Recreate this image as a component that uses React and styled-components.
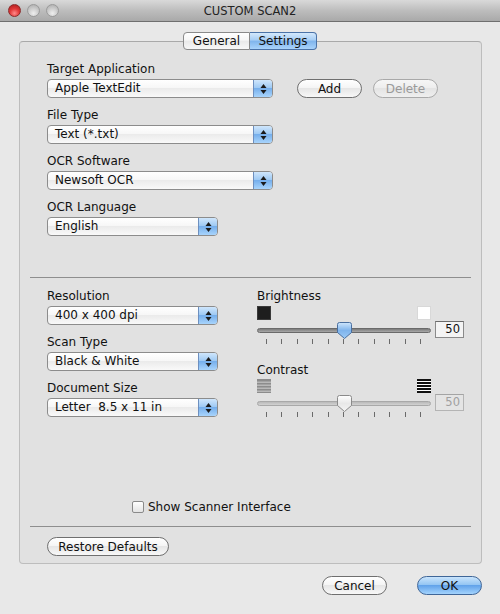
import styled, { createGlobalStyle } from 'styled-components';

const GlobalStyle = createGlobalStyle`
  html, body {
    margin: 0;
    padding: 0;
    background: #e8e8e8;
  }
  * {
    box-sizing: border-box;
  }
`;

const Window = styled.div`
  width: 500px;
  height: 614px;
  background: #e8e8e8;
  font-family: 'DejaVu Sans', 'Liberation Sans', sans-serif;
  font-size: 12px;
  color: #111;
  display: flex;
  flex-direction: column;
  overflow: hidden;
`;

const TitleBar = styled.div`
  height: 22px;
  flex: none;
  display: flex;
  align-items: center;
  padding-left: 8px;
  background: linear-gradient(#d9d9d9, #bdbdbd 50%, #a9a9a9);
  border-bottom: 1px solid #6f6f6f;
  position: relative;
`;

const Lights = styled.div`
  display: flex;
  gap: 6px;
`;

const Light = styled.div`
  width: 13px;
  height: 13px;
  border-radius: 50%;
  border: 1px solid ${p => (p.$red ? '#8c2a2a' : '#9a9a9a')};
  background: ${p =>
    p.$red
      ? 'radial-gradient(circle at 50% 75%, #ff8a8a 0, #e23a3a 45%, #a81c1c 100%)'
      : 'radial-gradient(circle at 50% 75%, #eeeeee 0, #cfcfcf 45%, #a8a8a8 100%)'};
`;

const Title = styled.div`
  position: absolute;
  left: 0;
  right: 0;
  text-align: center;
  font-size: 11.5px;
  color: #222;
  pointer-events: none;
`;

const Content = styled.div`
  flex: 1;
  display: flex;
  flex-direction: column;
  padding: 10px 18px 0 19px;
`;

const Tabs = styled.div`
  display: flex;
  justify-content: center;
  margin-bottom: -9px;
  position: relative;
  z-index: 1;
  padding-right: 1px;
`;

const Tab = styled.div`
  width: 67px;
  height: 18px;
  display: flex;
  align-items: center;
  justify-content: center;
  border: 1px solid ${p => (p.$active ? '#4b73a8' : '#8a8a8a')};
  border-radius: ${p => (p.$first ? '4px 0 0 4px' : '0 4px 4px 0')};
  border-left-width: ${p => (p.$first ? '1px' : '0')};
  background: ${p =>
    p.$active
      ? 'linear-gradient(#d3e8fc, #a6cdf4 45%, #7fb4ec 50%, #a9d3fb)'
      : 'linear-gradient(#ffffff, #f6f6f6 45%, #e9e9e9 50%, #f7f7f7)'};
`;

const GroupBox = styled.div`
  height: 523px;
  display: flex;
  flex-direction: column;
  background: #e1e1e1;
  border: 1px solid #bdbdbd;
  border-top-color: #a9a9a9;
  border-radius: 4px;
  padding: 0 10px;
`;

const UpperSection = styled.div`
  padding: 19px 17px 41px;
  display: flex;
  flex-direction: column;
  gap: 9px;
`;

const Separator = styled.div`
  height: 1px;
  background: #8e8e8e;
  flex: none;
`;

const LowerSection = styled.div`
  flex: 1;
  padding: 10px 17px 11px;
  display: flex;
  flex-direction: column;
`;

const Columns = styled.div`
  display: flex;
  gap: 40px;
`;

const LeftColumn = styled.div`
  width: 170px;
  display: flex;
  flex-direction: column;
  gap: 9px;
`;

const RightColumn = styled.div`
  display: flex;
  flex-direction: column;
`;

const Field = styled.div`
  display: flex;
  flex-direction: column;
  gap: 2px;
`;

const FieldRow = styled.div`
  display: flex;
  align-items: center;
  gap: 24px;
`;

const ButtonPair = styled.div`
  display: flex;
  gap: 11px;
`;

const Label = styled.div`
  height: 16px;
  line-height: 16px;
  white-space: nowrap;
  margin-top: ${p => p.$mt || 0}px;
`;

const Popup = styled.div`
  width: ${p => p.$width}px;
  height: 19px;
  display: flex;
  border: 1px solid #8c8c8c;
  border-radius: 4px;
  overflow: hidden;
  background: linear-gradient(#ffffff, #f7f7f7 45%, #ebebeb 50%, #f9f9f9);
`;

const PopupText = styled.div`
  flex: 1;
  padding-left: 7px;
  line-height: 17px;
  white-space: nowrap;
`;

const PopupArrows = styled.div`
  width: 19px;
  display: flex;
  align-items: center;
  justify-content: center;
  border-left: 1px solid #6d8fbf;
  background: linear-gradient(#cfe6fc, #9fcaf4 45%, #76afec 50%, #a8d4fc);
`;

const PushButton = styled.div`
  width: ${p => p.$width}px;
  height: 19px;
  display: flex;
  align-items: center;
  justify-content: center;
  border-radius: 10px;
  border: 1px solid ${p => (p.$disabled ? '#a9a9a9' : p.$primary ? '#3f6698' : '#6f6f6f')};
  color: ${p => (p.$disabled ? '#9a9a9a' : '#111')};
  background: ${p =>
    p.$primary
      ? 'linear-gradient(#c9e4fc, #95c6f3 45%, #62a3ea 50%, #a3d3fd)'
      : p.$disabled
      ? 'linear-gradient(#f6f6f6, #eeeeee 45%, #e4e4e4 50%, #efefef)'
      : 'linear-gradient(#ffffff, #f5f5f5 45%, #e6e6e6 50%, #f8f8f8)'};
  white-space: nowrap;
`;

const IconRow = styled.div`
  width: 174px;
  height: ${p => p.$h}px;
  margin-top: ${p => p.$mt}px;
  display: flex;
  justify-content: space-between;
  align-items: flex-start;
`;

const SliderRow = styled.div`
  display: flex;
  align-items: flex-start;
  gap: 4px;
  margin-top: ${p => p.$mt}px;
`;

const SliderColumn = styled.div`
  width: 174px;
  display: flex;
  flex-direction: column;
`;

const SliderArea = styled.div`
  position: relative;
  height: 17px;
  display: flex;
  align-items: center;
`;

const Track = styled.div`
  flex: 1;
  height: 5px;
  border-radius: 3px;
  border: 1px solid ${p => (p.$disabled ? '#a8a8a8' : '#6a6a6a')};
  background: ${p =>
    p.$disabled
      ? 'linear-gradient(#b9b9b9, #d2d2d2)'
      : 'linear-gradient(#7a7a7a, #a9a9a9)'};
`;

const Thumb = styled.div`
  position: absolute;
  top: 0;
  left: calc(${p => p.$pos}% - 7px);
  width: 15px;
  height: 17px;
  display: flex;
`;

const Ticks = styled.div`
  display: flex;
  justify-content: space-between;
  padding: 0 10px 0 9px;
  height: 5px;
`;

const Tick = styled.div`
  width: 1px;
  height: 5px;
  background: #6a6a6a;
`;

const NumberField = styled.div`
  width: 29px;
  height: 17px;
  margin-top: -1px;
  border: 1px solid ${p => (p.$disabled ? '#b4b4b4' : '#8a8a8a')};
  border-top-color: ${p => (p.$disabled ? '#a4a4a4' : '#6c6c6c')};
  background: ${p => (p.$disabled ? '#e4e4e4' : '#f4f4f4')};
  color: ${p => (p.$disabled ? '#a0a0a0' : '#111')};
  text-align: right;
  padding-right: 3px;
  line-height: 15px;
  font-size: 11.5px;
`;

const CheckRow = styled.div`
  margin-top: auto;
  margin-left: 85px;
  height: 16px;
  display: flex;
  align-items: center;
  gap: 4px;
`;

const CheckBox = styled.div`
  width: 12px;
  height: 12px;
  border: 1px solid #8a8a8a;
  border-radius: 2px;
  background: linear-gradient(#ffffff, #f1f1f1 50%, #e4e4e4);
`;

const BottomSection = styled.div`
  padding: 10px 17px 7px;
`;

const Footer = styled.div`
  display: flex;
  justify-content: flex-end;
  gap: 30px;
  margin-top: 12px;
`;

function Arrows() {
  return (
    <svg width="7" height="12" viewBox="0 0 7 12">
      <path d="M3.5 1 L6.5 5 L0.5 5 Z" fill="#1b1b1b" />
      <path d="M3.5 11 L6.5 7 L0.5 7 Z" fill="#1b1b1b" />
    </svg>
  );
}

function Select({ value, width }) {
  return (
    <Popup $width={width}>
      <PopupText>{value}</PopupText>
      <PopupArrows>
        <Arrows />
      </PopupArrows>
    </Popup>
  );
}

function ThumbShape({ blue }) {
  const id = blue ? 'thumbBlue' : 'thumbWhite';
  return (
    <svg width="15" height="17" viewBox="0 0 15 17">
      <defs>
        <linearGradient id={id} x1="0" y1="0" x2="0" y2="1">
          <stop offset="0" stopColor={blue ? '#cfe6fc' : '#ffffff'} />
          <stop offset="0.5" stopColor={blue ? '#7fb4ec' : '#e8e8e8'} />
          <stop offset="1" stopColor={blue ? '#9ccaf6' : '#f4f4f4'} />
        </linearGradient>
      </defs>
      <path
        d="M2.5 0.5 H12.5 Q14.5 0.5 14.5 2.5 V10.5 L7.5 16.5 L0.5 10.5 V2.5 Q0.5 0.5 2.5 0.5 Z"
        fill={`url(#${id})`}
        stroke={blue ? '#4a6f9f' : '#8a8a8a'}
      />
    </svg>
  );
}

function LowContrast() {
  return (
    <svg width="14" height="14" viewBox="0 0 14 14">
      <rect x="0" y="0" width="14" height="14" fill="#8c8c8c" />
      {[1, 4, 7, 10].map(y => (
        <rect key={y} x="0" y={y + 1.5} width="14" height="1.5" fill="#b8b8b8" />
      ))}
    </svg>
  );
}

function HighContrast() {
  return (
    <svg width="14" height="14" viewBox="0 0 14 14">
      <rect x="0" y="0" width="14" height="14" fill="#ffffff" />
      {[0, 3, 6, 9, 12].map(y => (
        <rect key={y} x="0" y={y} width="14" height="2" fill="#111111" />
      ))}
    </svg>
  );
}

function Square({ dark }) {
  return (
    <svg width="14" height="14" viewBox="0 0 14 14">
      <rect
        x="0.5"
        y="0.5"
        width="13"
        height="13"
        fill={dark ? '#1e1e1e' : '#ffffff'}
        stroke={dark ? '#3a3a3a' : '#d8d8d8'}
      />
    </svg>
  );
}

function Slider({ value, disabled }) {
  return (
    <SliderColumn>
      <SliderArea>
        <Track $disabled={disabled} />
        <Thumb $pos={value}>
          <ThumbShape blue={!disabled} />
        </Thumb>
      </SliderArea>
      <Ticks>
        {Array.from({ length: 11 }).map((_, i) => (
          <Tick key={i} />
        ))}
      </Ticks>
    </SliderColumn>
  );
}

function App() {
  return (
    <Window>
      <GlobalStyle />
      <TitleBar>
        <Lights>
          <Light $red />
          <Light />
          <Light />
        </Lights>
        <Title>CUSTOM SCAN2</Title>
      </TitleBar>
      <Content>
        <Tabs>
          <Tab $first>General</Tab>
          <Tab $active>Settings</Tab>
        </Tabs>
        <GroupBox>
          <UpperSection>
            <Field>
              <Label>Target Application</Label>
              <FieldRow>
                <Select value="Apple TextEdit" width={226} />
                <ButtonPair>
                  <PushButton $width={65}>Add</PushButton>
                  <PushButton $width={65} $disabled>
                    Delete
                  </PushButton>
                </ButtonPair>
              </FieldRow>
            </Field>
            <Field>
              <Label>File Type</Label>
              <Select value="Text (*.txt)" width={226} />
            </Field>
            <Field>
              <Label>OCR Software</Label>
              <Select value="Newsoft OCR" width={226} />
            </Field>
            <Field>
              <Label>OCR Language</Label>
              <Select value="English" width={171} />
            </Field>
          </UpperSection>
          <Separator />
          <LowerSection>
            <Columns>
              <LeftColumn>
                <Field>
                  <Label>Resolution</Label>
                  <Select value="400 x 400 dpi" width={171} />
                </Field>
                <Field>
                  <Label>Scan Type</Label>
                  <Select value="Black & White" width={171} />
                </Field>
                <Field>
                  <Label>Document Size</Label>
                  <Select value={'Letter\u00a0\u00a08.5 x 11 in'} width={171} />
                </Field>
              </LeftColumn>
              <RightColumn>
                <Label>Brightness</Label>
                <IconRow $h={13} $mt={2}>
                  <Square dark />
                  <Square />
                </IconRow>
                <SliderRow $mt={3}>
                  <Slider value={50} />
                  <NumberField>50</NumberField>
                </SliderRow>
                <Label $mt={18}>Contrast</Label>
                <IconRow $h={14} $mt={1}>
                  <LowContrast />
                  <HighContrast />
                </IconRow>
                <SliderRow $mt={2}>
                  <Slider value={50} disabled />
                  <NumberField $disabled>50</NumberField>
                </SliderRow>
              </RightColumn>
            </Columns>
            <CheckRow>
              <CheckBox />
              <span>Show Scanner Interface</span>
            </CheckRow>
          </LowerSection>
          <Separator />
          <BottomSection>
            <PushButton $width={122}>Restore Defaults</PushButton>
          </BottomSection>
        </GroupBox>
        <Footer>
          <PushButton $width={65}>Cancel</PushButton>
          <PushButton $width={65} $primary>
            OK
          </PushButton>
        </Footer>
      </Content>
    </Window>
  );
}

export default App;
